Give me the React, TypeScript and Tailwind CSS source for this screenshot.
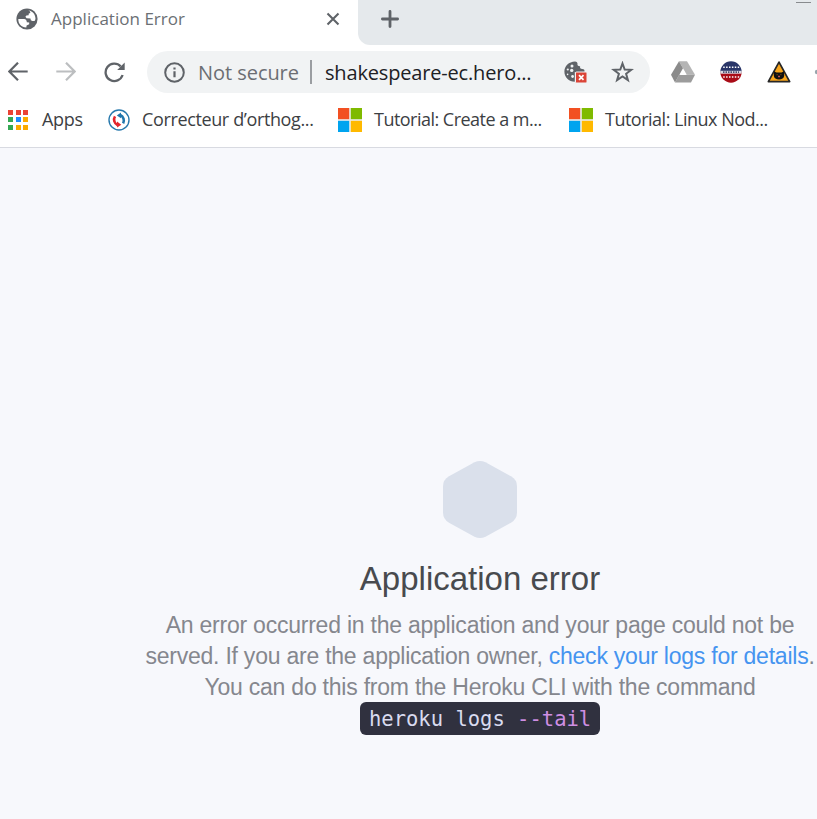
import React from "react";

function Globe() {
  return (
    <svg className="ml-[16px] h-[22px] w-[22px] shrink-0" viewBox="0 0 22 22">
      <circle cx="11" cy="11" r="10.6" fill="#5f6368" />
      <path d="M12.4 2.4 C16.8 2.9 19.6 6.4 19.5 11 L18.6 13 L16.4 13.1 L14.8 12.2 L14.5 10.4 L10.6 10.2 L9.4 8.8 L10.4 7.4 L12.6 7.2 L12.8 5.6 L14.4 5 L13.8 3.2 Z" fill="#fff" />
      <path d="M2.3 10.9 L8 11 Q10.8 11.3 10.8 14.3 L13.2 14.5 L13.2 16.3 L10.6 17.4 L10.3 19.5 C5.4 19.3 2.2 15.8 2.3 10.9 Z" fill="#fff" />
    </svg>
  );
}

function MicrosoftLogo() {
  return (
    <svg className="h-6 w-6 shrink-0" viewBox="0 0 24 24">
      <path fill="#ebebeb" d="M11 0h2v11h11v2H13v11h-2V13H0v-2h11z" />
      <path fill="#f25022" d="M0 0h11.2v11.2H0z" />
      <path fill="#7fba00" d="M12.8 0H24v11.2H12.8z" />
      <path fill="#00a4ef" d="M0 12.8h11.2V24H0z" />
      <path fill="#ffb900" d="M12.8 12.8H24V24H12.8z" />
    </svg>
  );
}

const appColors = ["#ea4335", "#ea4335", "#ea4335", "#34a853", "#1a8cff", "#fbab00", "#34a853", "#fbab00", "#fbab00"];

function TabStrip() {
  return (
    <div className="flex h-[45px] shrink-0">
      <div className="flex h-[38px] w-[358px] shrink-0 items-center">
        <Globe />
        <span className="ml-[13px] w-[275px] text-[17px] tracking-[0.02px] text-[#6b6f74]">Application Error</span>
        <svg className="h-[14px] w-[14px] shrink-0" viewBox="0 0 14 14">
          <path d="M1.5 1.5l11 11M12.5 1.5l-11 11" stroke="#5f6368" strokeWidth="2.1" />
        </svg>
      </div>
      <div className="flex h-[45px] grow justify-between rounded-bl-[12px] bg-[#e5e9ec]">
        <svg className="mt-[10px] ml-[23px] h-[18px] w-[18px]" viewBox="0 0 18 18">
          <path d="M9 1.4v15.2M1.4 9h15.2" stroke="#5f6368" strokeWidth="2.8" strokeLinecap="round" />
        </svg>
        <div className="mt-[2px] mr-[6px] h-px w-[15px] bg-[#888b8e]" />
      </div>
    </div>
  );
}

function NavIcons() {
  return (
    <div className="flex w-[147px] shrink-0 items-center">
      <svg className="ml-[8px] h-[20px] w-[20px]" viewBox="0 0 20 20" fill="none" stroke="#5f6368" strokeWidth="2.2">
        <path d="M19.7 9.5H1.7M10 0.7L1.3 9.5l8.7 8.8" />
      </svg>
      <svg className="ml-[28px] h-[20px] w-[20px]" viewBox="0 0 20 20" fill="none" stroke="#bcbec0" strokeWidth="2.2">
        <path d="M0.3 9.5h18M10 0.7l8.7 8.8-8.7 8.8" />
      </svg>
      <svg className="ml-[28px] h-[21px] w-[21px]" viewBox="0 0 21 21">
        <path d="M18.6 13A8.7 8.7 0 1 1 16.7 4.4" fill="none" stroke="#5f6368" strokeWidth="2.3" />
        <path d="M20.7 0.5V8h-7.5z" fill="#5f6368" />
      </svg>
    </div>
  );
}

function CookieIcon() {
  return (
    <svg className="mt-px h-[24px] w-[24px] shrink-0" viewBox="0 0 24 24">
      <path d="M11 0.4C4.8 0.6 0.4 5 0.4 10.5c0 6 4.4 10.2 10.4 10.2V11h9.7c.2-2-.2-2.8-2.2-3-2.1 0-2.4-1-2.2-2.8-2 .1-3-.7-2.6-2.4.1-1.4-.8-2.2-2.5-2.4z" fill="#5f6368" />
      <g fill="#f1f3f4">
        <circle cx="8" cy="4.9" r="1.5" />
        <circle cx="3.8" cy="8.5" r="1.1" />
        <circle cx="7.7" cy="9.4" r="1.7" />
        <circle cx="3.6" cy="13.4" r="0.8" />
        <circle cx="8.6" cy="15.5" r="1.4" />
      </g>
      <rect x="11.5" y="11" width="11.5" height="11" rx="1" fill="#db4437" stroke="#f1f3f4" strokeWidth="1" />
      <path d="M15 14.2l4.5 4.6M19.5 14.2L15 18.8" stroke="#fff" strokeWidth="1.7" />
    </svg>
  );
}

function Omnibox() {
  return (
    <div className="flex h-[42px] w-[503px] shrink-0 items-center rounded-full bg-[#f1f3f4]">
      <svg className="ml-[17px] h-[21px] w-[21px] shrink-0" viewBox="0 0 21 21">
        <circle cx="10.5" cy="10.5" r="9.3" fill="none" stroke="#5f6368" strokeWidth="2" />
        <path d="M9.4 9.3h2.2v6H9.4zM9.4 5.4h2.2v2.2H9.4z" fill="#5f6368" />
      </svg>
      <span className="ml-[13px] w-[112px] shrink-0 pt-[2px] text-[20px] tracking-[-0.05px] text-[#6b6e73]">Not secure</span>
      <div className="h-[24px] w-[2px] shrink-0 bg-[#9a9da1]" />
      <span className="ml-[13px] w-[239px] shrink-0 pt-[2px] text-[20px] tracking-[-0.17px] text-[#202124]">shakespeare-ec.hero...</span>
      <CookieIcon />
      <svg className="ml-[23px] h-[22px] w-[23px] shrink-0" viewBox="0 0 22 22">
        <path d="M11 2.5l2.2 6.1 6.5.2-5.1 4 1.8 6.3-5.4-3.7-5.4 3.7 1.8-6.3-5.1-4 6.5-.2z" fill="none" stroke="#5f6368" strokeWidth="2" />
      </svg>
    </div>
  );
}

function Extensions() {
  return (
    <>
      <svg className="ml-[21px] h-[22px] w-[24px] shrink-0" viewBox="0 0 24 22">
        <path d="M8 0.3h8l8 13.4h-8.2L12 7.2z" fill="#b5b5b5" />
        <path d="M8 0.3L0 13.7l4 7.8 8-14.3z" fill="#8b8b8b" />
        <path d="M8 13.7h16l-4 7.8H4z" fill="#9c9c9c" />
        <path d="M12 8.6l3.3 5.3H8.9z" fill="#fff" />
      </svg>
      <svg className="ml-[25px] h-[22px] w-[22px] shrink-0" viewBox="0 0 22 22">
        <path d="M0.3 11a10.7 10.7 0 0 1 21.4 0z" fill="#293568" />
        <path d="M0.3 11a10.7 10.7 0 0 0 21.4 0z" fill="#a90c17" />
        <path d="M0.3 9.8h21.4v2.9H0.3z" fill="#d9d9e1" />
        <path d="M3 11.2h16" stroke="#4d4f70" strokeWidth="1.7" strokeDasharray="1.5 1" />
        <path d="M3.2 6.3h16M3.2 15.9h16" stroke="#fff" strokeWidth="1.5" strokeDasharray="1.5 1.4" />
      </svg>
      <svg className="ml-[25px] h-[24px] w-[24px] shrink-0" viewBox="0 0 25 24">
        <path d="M12.5 1.7L23.6 22H1.4z" fill="#f8a51b" stroke="#272727" strokeWidth="1.8" strokeLinejoin="round" />
        <path d="M7.3 11.2l2.6 1.3h5.2l2.6-1.3.2 4.8c-.3 2.7-2.4 3.8-5.4 3.8s-5.1-1.1-5.4-3.8z" fill="#111" />
        <path d="M9.8 14.8h1.5M13.7 14.8h1.5" stroke="#7d521b" strokeWidth="0.8" />
        <path d="M11.7 16h1.6v1.5h-1.6z" fill="#e96569" />
      </svg>
      <svg className="ml-[23px] h-[6px] w-[3px] shrink-0" viewBox="0 0 3 6">
        <circle cx="3" cy="3" r="2.2" fill="#98a5ad" />
      </svg>
    </>
  );
}

function Bookmarks() {
  return (
    <div className="flex h-[54px] shrink-0 items-center overflow-hidden pb-px text-[18px] whitespace-nowrap text-[#3c4043]">
      <div className="ml-[8px] grid w-[20px] shrink-0 grid-cols-3 gap-[2.5px]">
        {appColors.map((color, i) => (
          <div key={i} className="h-[5px] w-[5px]" style={{ backgroundColor: color }} />
        ))}
      </div>
      <span className="ml-[14px] w-[66px] shrink-0 tracking-[-0.3px]">Apps</span>
      <svg className="h-[22px] w-[22px] shrink-0" viewBox="0 0 22 22">
        <circle cx="11" cy="11" r="10" fill="#fff" stroke="#2879ad" strokeWidth="1.4" />
        <path d="M9.5 16A6 6 0 0 1 7 7.4" fill="none" stroke="#e3242b" strokeWidth="2.6" />
        <path d="M9 12.6l4.3 3.1-4.2 2.8z" fill="#e3242b" />
        <path d="M12.2 6a6 6 0 0 1 2.9 8.4" fill="none" stroke="#2176ac" strokeWidth="2.6" />
        <path d="M13 3.4L8.8 6.4l4.2 2.9z" fill="#2176ac" />
      </svg>
      <span className="ml-[12px] w-[196px] shrink-0 tracking-[-0.37px]">Correcteur d’orthog...</span>
      <MicrosoftLogo />
      <span className="ml-[12px] w-[195px] shrink-0 tracking-[-0.52px]">Tutorial: Create a m...</span>
      <MicrosoftLogo />
      <span className="ml-[12px] shrink-0 tracking-[-0.5px]">Tutorial: Linux Nod...</span>
    </div>
  );
}

export default function App() {
  return (
    <div className="flex h-[819px] w-[817px] flex-col overflow-hidden bg-white font-['Open_Sans','Noto_Sans',sans-serif]">
      <TabStrip />
      <div className="flex h-[48px] shrink-0 items-end overflow-hidden whitespace-nowrap">
        <div className="flex h-[42px] w-full items-center">
          <NavIcons />
          <Omnibox />
          <Extensions />
        </div>
      </div>
      <Bookmarks />
      <main className="flex grow flex-col items-center border-t border-[#d8dae1] bg-[#f7f8fc] pl-[143px] font-['Liberation_Sans',Arial,sans-serif]">
        <svg className="mt-[313px] h-[77px] w-[74px] shrink-0" viewBox="0 0 74 77">
          <path d="M31.5 1.3Q37-1.3 42.5 1.3L68 15.3Q74 18.7 74 25.5V51.5Q74 58.3 68 61.7L42.5 75.7Q37 78.3 31.5 75.7L6 61.7Q0 58.3 0 51.5V25.5Q0 18.7 6 15.3z" fill="#dae0eb" />
        </svg>
        <h1 className="mt-[21px] h-[40px] text-[33px] leading-[40px] font-normal whitespace-nowrap text-[#484a4e]">Application error</h1>
        <p className="mt-[11px] -mb-px text-center text-[23px] leading-[31px] tracking-[-0.23px] whitespace-nowrap text-[#85878e]">
          An error occurred in the application and your page could not be
          <br />
          served. If you are the application owner, <a className="text-[#4594f0]">check your logs for details</a>.
          <br />
          You can do this from the Heroku CLI with the command
        </p>
        <code className="h-[33px] w-[240px] rounded-[6px] bg-[#30313f] pl-[9px] font-['DejaVu_Sans_Mono',monospace] text-[20.5px] leading-[35px] whitespace-pre text-[#d9dbef]">
          heroku logs <span className="text-[#cf8fe3]">--tail</span>
        </code>
      </main>
    </div>
  );
}
